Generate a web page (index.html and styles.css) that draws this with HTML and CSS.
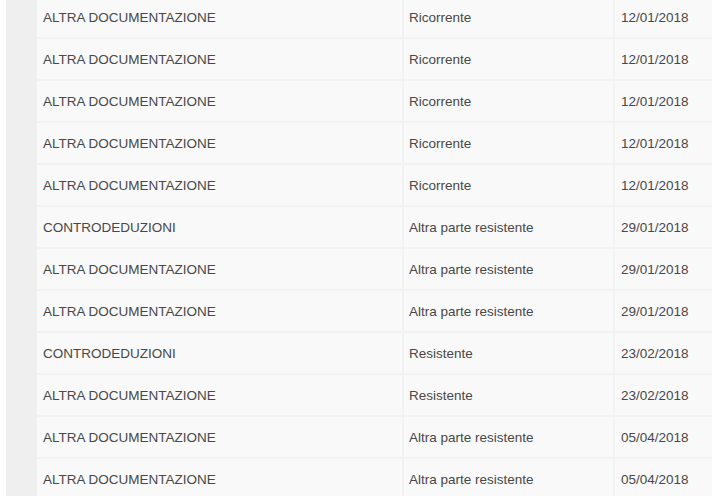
FILE: index.html
```html
<!DOCTYPE html>
<html lang="it">
<head>
    <meta charset="UTF-8">
    <meta name="viewport" content="width=device-width, initial-scale=1.0">
    <title>Documenti</title>
    <link rel="stylesheet" href="styles.css">
</head>
<body>
    <div class="page">
        <div class="side"></div>
        <div class="list">
            <div class="row"><div class="c1">ALTRA DOCUMENTAZIONE</div><div class="c2">Ricorrente</div><div class="c3">12/01/2018</div></div>
            <div class="row"><div class="c1">ALTRA DOCUMENTAZIONE</div><div class="c2">Ricorrente</div><div class="c3">12/01/2018</div></div>
            <div class="row"><div class="c1">ALTRA DOCUMENTAZIONE</div><div class="c2">Ricorrente</div><div class="c3">12/01/2018</div></div>
            <div class="row"><div class="c1">ALTRA DOCUMENTAZIONE</div><div class="c2">Ricorrente</div><div class="c3">12/01/2018</div></div>
            <div class="row"><div class="c1">ALTRA DOCUMENTAZIONE</div><div class="c2">Ricorrente</div><div class="c3">12/01/2018</div></div>
            <div class="row"><div class="c1">CONTRODEDUZIONI</div><div class="c2">Altra parte resistente</div><div class="c3">29/01/2018</div></div>
            <div class="row"><div class="c1">ALTRA DOCUMENTAZIONE</div><div class="c2">Altra parte resistente</div><div class="c3">29/01/2018</div></div>
            <div class="row"><div class="c1">ALTRA DOCUMENTAZIONE</div><div class="c2">Altra parte resistente</div><div class="c3">29/01/2018</div></div>
            <div class="row"><div class="c1">CONTRODEDUZIONI</div><div class="c2">Resistente</div><div class="c3">23/02/2018</div></div>
            <div class="row"><div class="c1">ALTRA DOCUMENTAZIONE</div><div class="c2">Resistente</div><div class="c3">23/02/2018</div></div>
            <div class="row"><div class="c1">ALTRA DOCUMENTAZIONE</div><div class="c2">Altra parte resistente</div><div class="c3">05/04/2018</div></div>
            <div class="row"><div class="c1">ALTRA DOCUMENTAZIONE</div><div class="c2">Altra parte resistente</div><div class="c3">05/04/2018</div></div>
        </div>
    </div>
</body>
</html>
```

FILE: styles.css
```css
body { margin: 0; background: #fff; font-family: "Liberation Sans", Arial, sans-serif; font-size: 13.5px; color: #484848; overflow: hidden; }
.page { display: flex; padding-left: 6px; margin-top: -3px; height: 499px; }
.side { width: 31px; background: #efefef; flex: none; }
.list { flex: 1; display: grid; row-gap: 2px; background: #f2f2f2; align-content: start; }
.row { display: grid; grid-template-columns: 365px 209px 1fr; column-gap: 2px; }
.row > div { background: #f9f9f9; height: 40px; display: flex; align-items: center; }
.c1 { padding-left: 6px; }
.c2 { padding-left: 5px; }
.c3 { padding-left: 6px; }
```
